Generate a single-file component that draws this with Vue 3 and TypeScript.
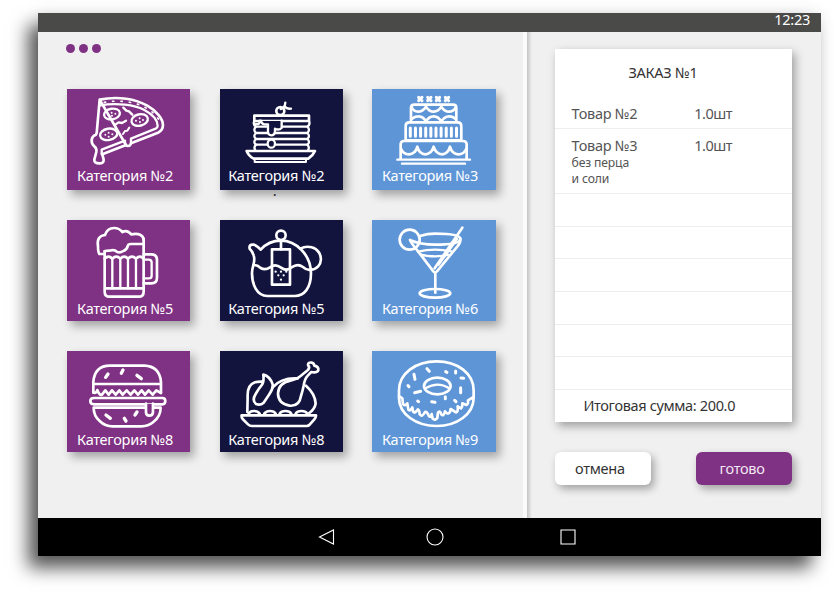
<script setup lang="ts">
interface Shape {
  d: string
  w?: number
  kind?: 'line' | 'cover' | 'solid'
  dash?: string
}
interface Category {
  name: string
  tone: 'plum' | 'navy' | 'sky'
  box: string
  shapes: Shape[]
  mark?: string
}
interface OrderItem {
  name: string
  qty: string
  notes: string[]
}

const oval = (cx: number, cy: number, rx: number, ry: number = rx, rot = 0): string => {
  const a = (rot * Math.PI) / 180
  const dx = rx * Math.cos(a)
  const dy = rx * Math.sin(a)
  return `M${cx - dx} ${cy - dy}A${rx} ${ry} ${rot} 1 1 ${cx + dx} ${cy + dy}A${rx} ${ry} ${rot} 1 1 ${cx - dx} ${cy - dy}Z`
}
const dots = (r: number, ...points: [number, number][]): string =>
  points.map(([x, y]) => oval(x, y, r)).join('')

const pizza: Shape[] = [
  { d: 'M119 58C175 46 228 57 262 76C290 92 309 116 309 134C309 147 303 153 294 157L213 189M198 194L127 222L131 238Q132 249 118 249Q102 249 103 238L109 215Q111 204 103 198Q94 191 95 178Q97 166 108 163Q111 158 111 148L119 58Z' },
  { d: 'M121 75C170 66 225 74 252 88C278 102 293 118 293 136Q293 142 287 145L213 175V188Q212 197 204 197Q195 197 195 188V181L125 208V222', w: 7 },
  { d: 'M133 66C175 58 225 64 257 82C280 95 298 112 301 134', w: 5, dash: '4 21' },
  { d: oval(156, 101, 24, 16, -10), w: 7 },
  { d: oval(239, 119, 25, 17, -14), w: 7 },
  { d: oval(146, 162, 26, 17, -10), w: 7 },
  { d: dots(3, [145, 103], [155, 97], [166, 100], [156, 106], [228, 121], [239, 114], [249, 119], [240, 125], [136, 163], [146, 157], [157, 162], [146, 169]), kind: 'solid' },
  { d: 'M190 82L199 91L207 93L217 103', w: 7 },
  { d: 'M166 133L176 126L186 128L198 121', w: 7 },
  { d: 'M189 161L195 152L202 151L208 142', w: 6 },
]

const pancakes: Shape[] = [
  { d: 'M133 106H297V122H133Z' },
  { d: 'M133 122Q128 132 138 139Q128 148 138 158Q128 167 138 176Q128 185 138 193Q130 201 136 210M297 122Q302 132 292 139Q302 148 292 158Q302 167 292 176Q302 185 292 193Q300 201 294 210', w: 7 },
  { d: 'M138 139H292M138 158H292M138 176H292M138 193H292', w: 7 },
  { d: 'M152 122Q154 131 163 132H174V155Q175 165 184 165Q194 165 195 154V145Q206 151 215 143V122Z', kind: 'cover', w: 0 },
  { d: 'M134 131H146Q149 128 149 121H153Q154 131 163 132H174V155Q175 165 184 165Q194 165 195 154V145Q206 151 215 143V121', w: 7 },
  { d: oval(184, 190, 11, 12), kind: 'cover', w: 7 },
  { d: oval(211, 92, 12, 12), kind: 'cover', w: 8 },
  { d: 'M212 86Q225 83 226 67M223 77Q231 87 243 85', w: 7 },
  { d: 'M110 212H315Q310 224 295 235H131Q116 227 110 212Z' },
  { d: 'M134 235V245H288V235', w: 6 },
]

const cake: Shape[] = [
  { d: [177, 204, 230, 257].map((x) => `M${x - 5} 51L${x + 5} 61M${x + 5} 51L${x - 5} 61`).join(''), w: 9 },
  { d: 'M149 124V82Q149 73 160 73H275Q285 73 285 82V124' },
  { d: 'M151 82Q158 94 170 94Q184 94 194 79Q204 94 217 94Q231 94 240 79Q250 94 263 94Q275 94 283 82' },
  { d: 'M151 116Q160 108 171 108Q187 108 194 124Q202 108 217 108Q232 108 240 124Q249 108 263 108Q275 108 283 116' },
  { d: 'M133 180V137Q133 126 144 126H289Q300 126 300 137V180Z' },
  { d: Array.from({ length: 10 }, (_, i) => `M${147 + i * 15.4} 143V168`).join(''), w: 9 },
  { d: 'M118 235V192Q118 182 128 182H305Q316 182 316 192V235' },
  { d: 'M119 205Q125 222 143 222Q162 222 168 199Q174 222 192 222Q210 222 217 199Q224 222 242 222Q260 222 266 199Q272 222 291 222Q308 222 315 205' },
  { d: 'M108 238H326M122 250H311', w: 7 },
]

const beer: Shape[] = [
  { d: 'M134 118V239Q134 254 149 254H236Q251 254 251 239V80M134 229H251' },
  { d: 'M134 126H118Q114 120 114 102Q109 72 135 69Q142 48 162 48Q178 48 187 60Q202 52 214 67Q248 61 251 83' },
  { d: 'M134 117L154 115Q164 112 170 119Q179 124 190 117Q200 114 203 103Q204 96 213 96H251' },
  { d: 'M134 140Q146 128 157 140Q169 128 181 140Q193 128 204 140Q216 128 228 140Q240 128 251 140' },
  { d: 'M157 139V229M181 139V229M204 139V229M228 139V229', w: 7 },
  { d: 'M251 127H274Q291 127 291 144V197Q291 214 274 214H251' },
  { d: 'M251 143H266Q275 143 275 151V191Q275 199 266 199H251', w: 7 },
]

const teapot: Shape[] = [
  { d: oval(213, 70, 14) },
  { d: 'M213 86V112' },
  { d: 'M152 113Q176 86 213 86C258 86 303 128 303 184C303 228 283 252 254 252H172C140 252 126 216 126 184C126 158 138 151 131 130Q128 118 119 110Q116 97 130 98Q140 99 152 113Z' },
  { d: 'M271 110Q288 101 305 106C343 116 342 171 302 173' },
  { d: 'M186 112H240V218H186Z' },
  { d: 'M131 159Q142 158 152 168Q166 176 180 166Q196 154 213 167Q230 180 245 166Q263 153 279 165Q291 176 303 173' },
  { d: dots(3.4, [197, 179], [213, 179], [229, 179], [205, 190], [221, 190], [213, 203]), kind: 'solid' },
]

const cocktail: Shape[] = [
  { d: oval(145, 83, 30) },
  { d: 'M176 72Q198 65 222 65Q297 65 297 81Q297 98 222 98Q177 98 147 85' },
  { d: 'M146 84Q152 97 168 115L216 178Q221 184 227 178L286 106Q299 93 297 80' },
  { d: 'M170 119Q194 113 222 113Q244 113 270 118M177 127Q195 133 222 133Q245 133 261 128', w: 7 },
  { d: 'M303 47L220 169M287 81L231 158', w: 8 },
  { d: 'M222 183V242' },
  { d: oval(221, 244, 46, 13) },
]

const burger: Shape[] = [
  { d: 'M100 151V119Q104 70 150 70H253Q299 72 303 119V151M101 125H302' },
  { d: 'M100 150Q108 155 112 143Q118 160 126 157L136 144L146 157L156 144L167 157L178 144L188 157L200 144L212 157L223 144L234 157L245 144L255 157L266 144L278 157L289 144L303 152', w: 8 },
  { d: 'M102 167H307Q316 167 316 176Q316 186 307 186H102Q91 186 91 176Q91 167 102 167Z' },
  { d: 'M101 196H302Q302 222 280 239Q265 252 244 252H158Q135 252 119 236Q101 220 101 196Z' },
  { d: 'M258 184V210Q259 220 268 220Q278 220 279 210V184', kind: 'cover' },
  { d: 'M144 95L137 105M189 83L184 93M231 99L244 109M138 218L151 228M231 209L225 218M193 228L198 236', w: 10 },
]

const chicken: Shape[] = [
  { d: 'M112 209L113 164Q111 128 135 120Q145 117 157 118' },
  { d: 'M160 97Q180 102 188 126Q190 139 178 156L161 181Q151 190 138 185Q125 174 137 155Q146 139 154 130Q163 121 160 97Z' },
  { d: 'M188 135Q214 105 263 108' },
  { d: 'M294 83Q301 75 294 68Q294 59 306 61Q313 63 313 70Q327 73 325 84Q320 93 304 89L294 99Q284 109 281 130Q278 145 273 161Q268 193 239 190Q204 184 204 153Q206 122 241 115Q261 111 269 103Z' },
  { d: 'M288 130Q316 155 317 184Q314 200 298 212' },
  { d: 'M116 214Q120 206 132 206Q143 206 149 214M163 214Q169 206 180 206Q192 206 197 214M209 214Q214 206 226 206Q239 206 244 214M257 214Q262 206 274 206Q287 206 292 214' },
  { d: 'M95 219H318Q319 224 313 231L299 247Q296 251 290 251H126Q119 251 114 246L98 230Q94 225 95 219Z' },
]

const donut: Shape[] = [
  { d: 'M226 57C290 57 337 94 337 144V167C337 215 287 251 226 251C164 251 113 215 113 167V144C113 94 162 57 226 57Z' },
  { d: oval(228, 131, 40, 25) },
  { d: 'M192 138Q211 127 229 127Q246 127 264 138', w: 7 },
  { d: 'M113 161L123 168L125 185Q130 193 138 183L141 202Q146 208 153 195L155 207Q161 215 170 201Q175 204 175 216Q182 226 191 209Q197 207 203 222Q208 226 211 215L214 229Q221 236 228 227L230 211Q236 203 240 216Q247 224 251 207L257 213Q266 216 268 200Q276 205 284 210Q291 209 289 192L299 198Q304 192 303 183L315 188Q322 185 320 174L337 164', w: 8 },
  { d: 'M158 96L161 111M197 79L204 87M253 88L257 90M283 86V92M299 107L307 108M298 136V151M140 130L143 133M160 151L178 147M252 163V169M169 176L172 178M211 178L221 180M280 174L284 178', w: 9 },
]

const categories: Category[] = [
  { name: 'Категория №2', tone: 'plum', box: '21 26 370 237', shapes: pizza },
  { name: 'Категория №2', tone: 'navy', box: '30 26 370 237', shapes: pancakes, mark: '.' },
  { name: 'Категория №3', tone: 'sky', box: '32 26 370 237', shapes: cake },
  { name: 'Категория №5', tone: 'plum', box: '21 24 370 237', shapes: beer },
  { name: 'Категория №5', tone: 'navy', box: '30 24 370 237', shapes: teapot },
  { name: 'Категория №6', tone: 'sky', box: '32 24 370 237', shapes: cocktail },
  { name: 'Категория №8', tone: 'plum', box: '21 26 370 237', shapes: burger },
  { name: 'Категория №8', tone: 'navy', box: '30 26 370 237', shapes: chicken },
  { name: 'Категория №9', tone: 'sky', box: '32 26 370 237', shapes: donut },
]

const items: OrderItem[] = [
  { name: 'Товар №2', qty: '1.0шт', notes: [] },
  { name: 'Товар №3', qty: '1.0шт', notes: ['без перца', 'и соли'] },
]
</script>

<template>
  <div class="page">
    <div class="tablet">
      <header class="status"><span>12:23</span></header>
      <main class="screen">
        <section class="menu">
          <div class="more"><i></i><i></i><i></i></div>
          <div class="grid">
            <button v-for="(c, i) in categories" :key="i" class="card" :class="[c.tone, { first: i < 3 }]">
              <svg class="icon" :viewBox="c.box" preserveAspectRatio="none">
                <path
                  v-for="(s, k) in c.shapes"
                  :key="k"
                  :d="s.d"
                  :class="s.kind ?? 'line'"
                  :stroke-width="s.kind === 'solid' ? 0 : (s.w ?? 8)"
                  :stroke-dasharray="s.dash"
                />
              </svg>
              <span class="label">{{ c.name }}</span>
              <span v-if="c.mark" class="mark">{{ c.mark }}</span>
            </button>
          </div>
        </section>
        <aside class="order">
          <div class="receipt">
            <h1>ЗАКАЗ №1</h1>
            <div v-for="item in items" :key="item.name" class="row">
              <div class="item">
                <span>{{ item.name }}</span>
                <small v-for="n in item.notes" :key="n">{{ n }}</small>
              </div>
              <span class="qty">{{ item.qty }}</span>
            </div>
            <div v-for="n in 6" :key="n" class="blank"></div>
            <div class="total">Итоговая сумма: 200.0</div>
          </div>
          <div class="actions">
            <button class="cancel">отмена</button>
            <button class="done">готово</button>
          </div>
        </aside>
      </main>
      <nav class="nav">
        <svg width="17" height="16" viewBox="0 0 17 16"><path d="M15.5 1V15L1.5 8Z" /></svg>
        <svg width="18" height="18" viewBox="0 0 18 18"><circle cx="9" cy="9" r="8" /></svg>
        <svg width="16" height="16" viewBox="0 0 16 16"><path d="M1 1H15V15H1Z" /></svg>
      </nav>
    </div>
  </div>
</template>

<style>
body {
  background: #fff;
}
</style>

<style scoped>
.page {
  box-sizing: border-box;
  width: 834px;
  height: 592px;
  padding: 13px 13px 36px 37.5px;
  overflow: hidden;
  font-family: 'Noto Sans', 'Open Sans', sans-serif;
  font-size: 14.5px;
  letter-spacing: -0.27px;
  color: #333;
}
.tablet {
  display: flex;
  flex-direction: column;
  height: 543px;
  background: #f0f0f0;
  box-shadow: -10px 12px 17px rgba(0, 0, 0, 0.65), 0 0 16px rgba(0, 0, 0, 0.08);
}
.status {
  flex: none;
  height: 18.5px;
  background: #4a4a48;
  color: #fff;
  text-align: right;
  padding-right: 11px;
  box-sizing: border-box;
  line-height: 13px;
}
.screen {
  flex: 1;
  display: flex;
  min-height: 0;
}
.menu {
  width: 485.5px;
  box-sizing: border-box;
  padding: 12.5px 0 0 29.5px;
}
.more {
  display: flex;
  gap: 4px;
  height: 9px;
  margin-left: -1px;
  margin-bottom: 36px;
}
.more i {
  width: 9px;
  height: 9px;
  border-radius: 50%;
  background: #7f3183;
}
.grid {
  display: grid;
  grid-template-columns: repeat(3, 123.3px);
  grid-auto-rows: 100.6px;
  gap: 30.4px 29.4px;
}
button {
  border: 0;
  margin: 0;
  padding: 0;
  font: inherit;
  letter-spacing: inherit;
}
.card {
  position: relative;
  display: flex;
  flex-direction: column;
  align-items: flex-start;
  box-shadow: 4px 5px 9px rgba(0, 0, 0, 0.33);
}
.plum {
  background: #7f3183;
  color: #7f3183;
}
.navy {
  background: #13143e;
  color: #13143e;
}
.sky {
  background: #5e95d7;
  color: #5e95d7;
}
.icon {
  display: block;
  flex: none;
  width: 123.3px;
  height: 79px;
}
.icon path {
  stroke: #fff;
  stroke-linecap: round;
  stroke-linejoin: round;
}
.line {
  fill: none;
}
.cover {
  fill: currentColor;
}
.solid {
  fill: #fff;
}
.label {
  color: #fff;
  line-height: 16px;
  margin: 1.5px 0 0 10px;
  white-space: nowrap;
}
.first .label {
  margin-top: -1.3px;
}
.navy .label {
  margin-left: 8.5px;
}
.sky .label {
  margin-left: 9.5px;
}
.mark {
  position: absolute;
  left: 53px;
  top: 96px;
  line-height: 10px;
  color: #222;
}
.order {
  flex: 1;
  border-left: 4px solid #fbfbfb;
  padding: 17.5px 29.5px 0 27.5px;
  background: linear-gradient(90deg, #c4c4c4, #f0f0f0 5px);
}
.receipt {
  height: 373px;
  background: #fff;
  box-shadow: 3px 4px 9px rgba(0, 0, 0, 0.35);
}
h1 {
  margin: 0;
  height: 47.5px;
  box-sizing: border-box;
  padding: 15px 0 0 74px;
  font-size: 14.5px;
  font-weight: 400;
  line-height: 17px;
}
.row {
  display: flex;
  box-sizing: border-box;
  min-height: 32px;
  padding: 7px 0 5px 17px;
  border-bottom: 1px solid #eee;
  line-height: 18px;
  color: #555;
}
.item {
  width: 122.8px;
  display: flex;
  flex-direction: column;
}
.qty {
  letter-spacing: -0.5px;
}
small {
  font-size: 12.2px;
  line-height: 16.4px;
  letter-spacing: -0.15px;
}
small:first-of-type {
  margin-top: 1.5px;
}
.blank {
  height: 32.7px;
  box-sizing: border-box;
  border-bottom: 1px solid #eee;
}
.total {
  padding: 6px 0 0 29px;
  line-height: 18px;
  letter-spacing: -0.35px;
}
.actions {
  display: flex;
  justify-content: space-between;
  margin-top: 29.5px;
}
.actions button {
  width: 96px;
  height: 33.5px;
  border-radius: 6px;
  box-shadow: 3px 4px 8px rgba(0, 0, 0, 0.33);
  line-height: 30px;
  text-align: left;
}
.actions .cancel {
  background: #fff;
  color: #333;
  padding-left: 20.5px;
}
.actions .done {
  background: #7f3183;
  color: #f3e8f3;
  padding-left: 24px;
}
.nav {
  flex: none;
  height: 38.5px;
  background: #000;
  display: flex;
  align-items: center;
  padding-left: 280px;
}
.nav svg {
  fill: none;
  stroke: #fff;
  stroke-width: 1.1;
}
.nav svg + svg {
  margin-left: 91px;
}
.nav svg:last-child {
  margin-left: 116px;
}
</style>
